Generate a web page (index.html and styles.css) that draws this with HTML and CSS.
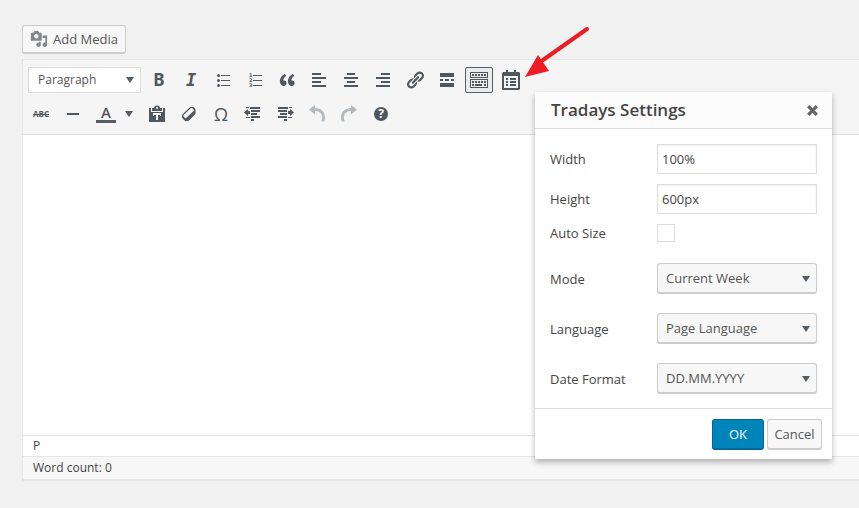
FILE: index.html
```html
<!DOCTYPE html>
<html lang="en">
<head>
<meta charset="utf-8">
<title>Tradays Settings</title>
<link rel="stylesheet" href="styles.css">
</head>
<body>
<main class="page">
  <button class="button add-media" type="button">
    <svg class="media-icon" viewBox="0 0 20 20" aria-hidden="true"><path d="M13 11V4c0-.55-.45-1-1-1h-1.67L9 1H5L3.67 3H2c-.55 0-1 .45-1 1v7c0 .55.45 1 1 1h10c.55 0 1-.45 1-1zM7 4.5c1.38 0 2.5 1.12 2.5 2.5S8.38 9.5 7 9.5 4.5 8.38 4.5 7 5.62 4.5 7 4.5zM14 6h5v10.5c0 1.38-1.12 2.5-2.5 2.5S14 17.88 14 16.5s1.12-2.5 2.5-2.5c.17 0 .34.02.5.05V9h-3V6zm-4 8.05V13h2v3.5c0 1.38-1.12 2.5-2.5 2.5S7 17.88 7 16.5 8.12 14 9.5 14c.17 0 .34.02.5.05z"/></svg>
    Add Media
  </button>

  <section class="editor">
    <div class="toolbar" role="toolbar" aria-label="Formatting">
      <div class="toolbar-row">
        <span class="select-wrap format">
          <select class="format-select" aria-label="Text format"><option>Paragraph</option></select>
        </span>
        <button class="tool tool-bold" type="button" aria-label="Bold">B</button>
        <button class="tool tool-italic" type="button" aria-label="Italic">I</button>
        <button class="tool" type="button" aria-label="Bulleted list"><svg viewBox="0 0 20 20"><circle cx="5.5" cy="5.5" r="1.5"/><circle cx="5.5" cy="10.5" r="1.5"/><circle cx="5.5" cy="15.5" r="1.5"/><path d="M8 5h9v1H8zM8 10h9v1H8zM8 15h9v1H8z"/></svg></button>
        <button class="tool" type="button" aria-label="Numbered list"><svg viewBox="0 0 20 20"><path d="M8 5h9v1H8zM8 10h9v1H8zM8 15h9v1H8z"/><text class="digit" x="4" y="7">1</text><text class="digit" x="4" y="12">2</text><text class="digit" x="4" y="17">3</text></svg></button>
        <button class="tool" type="button" aria-label="Blockquote"><svg viewBox="0 0 20 20"><path d="M9.49 13.22c0-.74-.2-1.38-.61-1.9-.62-.78-1.83-.88-2.53-.72-.29-1.65 1.11-3.75 2.92-4.65L7.88 4c-2.73 1.3-5.42 4.28-4.96 8.05C3.21 14.43 4.59 16 6.54 16c.85 0 1.56-.25 2.12-.75s.83-1.18.83-2.03zm8.05 0c0-.74-.2-1.38-.61-1.9-.63-.78-1.83-.88-2.53-.72-.29-1.65 1.11-3.75 2.92-4.65L15.93 4c-2.73 1.3-5.41 4.28-4.95 8.05.29 2.38 1.66 3.95 3.61 3.95.85 0 1.56-.25 2.12-.75s.83-1.18.83-2.03z"/></svg></button>
        <button class="tool" type="button" aria-label="Align left"><svg viewBox="0 0 20 20"><path d="M12 5V3H3v2h9zm5 4V7H3v2h14zm-5 4v-2H3v2h9zm5 4v-2H3v2h14z"/></svg></button>
        <button class="tool" type="button" aria-label="Align center"><svg viewBox="0 0 20 20"><path d="M14 5V3H6v2h8zm3 4V7H3v2h14zm-3 4v-2H6v2h8zm3 4v-2H3v2h14z"/></svg></button>
        <button class="tool" type="button" aria-label="Align right"><svg viewBox="0 0 20 20"><path d="M17 5V3H8v2h9zm0 4V7H3v2h14zm0 4v-2H8v2h9zm0 4v-2H3v2h14z"/></svg></button>
        <button class="tool" type="button" aria-label="Insert link"><svg viewBox="0 0 20 20"><path d="M17.74 2.76c1.68 1.69 1.68 4.41 0 6.1l-1.53 1.52c-1.12 1.12-2.7 1.47-4.14 1.09l2.62-2.61.76-.77.76-.76c.84-.84.84-2.2 0-3.04-.84-.85-2.2-.85-3.04 0l-.77.76-3.38 3.38c-.37-1.44-.02-3.02 1.1-4.14l1.52-1.53c1.69-1.68 4.42-1.68 6.1 0zM8.59 13.43l5.34-5.34c.42-.42.42-1.1 0-1.52-.44-.43-1.13-.39-1.53 0l-5.33 5.34c-.42.42-.42 1.1 0 1.52.44.43 1.13.39 1.52 0zm-.76 2.29l4.14-4.15c.38 1.44.03 3.02-1.09 4.14l-1.52 1.53c-1.69 1.68-4.41 1.68-6.1 0-1.68-1.68-1.68-4.42 0-6.1l1.53-1.52c1.12-1.12 2.7-1.47 4.14-1.1l-4.14 4.15c-.85.84-.85 2.2 0 3.05.84.84 2.2.84 3.04 0z"/></svg></button>
        <button class="tool" type="button" aria-label="Read more tag"><svg viewBox="0 0 20 20"><path d="M17 7V3H3v4h14zM6 11V9H3v2h3zm6 0V9H8v2h4zm5 0V9h-3v2h3zm0 6v-4H3v4h14z"/></svg></button>
        <button class="tool tool-active" type="button" aria-label="Toolbar toggle" aria-pressed="true"><svg viewBox="0 0 20 20"><path fill-rule="evenodd" d="M1 2h18v6H1zM2 3v4h16V3zM1 9h18v9H1zM2 10v7h16v-7z"/><path d="M3 4h2v2H3zM6 4h2v2H6zM9 4h2v2H9zM12 4h2v2h-2zM15 4h2v2h-2zM3 11h2v2H3zM6 11h2v2H6zM9 11h2v2H9zM12 11h2v2h-2zM15 11h2v2h-2zM3 14h2v2H3zM6 14h7v2H6zM15 14h2v2h-2z"/></svg></button>
        <button class="tool" type="button" aria-label="Tradays calendar"><svg viewBox="0 0 20 20"><path fill-rule="evenodd" d="M2 2h3V0h2v2h6V0h2v2h3l1 1v16l-1 1H2l-1-1V3zM3 6v12h14V6z"/><path d="M5 8h2v2H5zM9 8h6v2H9zM5 11h2v2H5zM9 11h6v2H9zM5 14h2v2H5zM9 14h6v2H9z"/></svg></button>
      </div>
      <div class="toolbar-row">
        <button class="tool tool-strike" type="button" aria-label="Strikethrough">ABC</button>
        <button class="tool" type="button" aria-label="Horizontal line"><svg viewBox="0 0 20 20"><path d="M4 9h12v2H4z"/></svg></button>
        <button class="tool tool-color" type="button" aria-label="Text color"><span class="color-letter">A</span><span class="caret"></span></button>
        <button class="tool" type="button" aria-label="Paste as text"><svg viewBox="0 0 20 20"><path fill-rule="evenodd" d="M5 7V4h2c0-1.500 1.200-2.500 3-2.500s3 1 3 2.500h2v3zM10 3a1 1 0 1 0 0 2 1 1 0 0 0 0-2z"/><path fill-rule="evenodd" d="M2 4h2v4h12V4h2v14H2zM6 9v3h1v-1h2v5h2v-5h2v1h1V9z"/></svg></button>
        <button class="tool" type="button" aria-label="Clear formatting"><svg viewBox="0 0 20 20"><path fill-rule="evenodd" d="M12 3h2c1 0 2.500 1.500 2.500 2.500V9c0 .6-.2 1-.6 1.400L10 16.400c-.5.500-.9.600-1.400.600H7c-.6 0-1-.2-1.400-.6l-2-2c-.4-.4-.6-.8-.6-1.400v-1.500c0-.5.2-.9.600-1.300l7-6.700c.4-.4.800-.5 1.400-.5zM11.700 4.300L4.400 11.300c-.3.300-.3.600 0 .9l1.800 1.800c.3.300.7.300 1 0l7.600-7.300c.3-.3.3-.7 0-1l-1.500-1.400c-.5-.4-1.100-.4-1.600 0z"/></svg></button>
        <button class="tool tool-omega" type="button" aria-label="Special character">Ω</button>
        <button class="tool" type="button" aria-label="Decrease indent"><svg viewBox="0 0 20 20"><path d="M3 3h3v1H3zM7 3h10v2H7zM8 6h9v2H8zM8 9h6v2H8zM8 12h9v2H8zM3 13h4v1H3zM8 15h3v2H8zM1 8.500L5 5v2h2v3H5v2z"/></svg></button>
        <button class="tool" type="button" aria-label="Increase indent"><svg viewBox="0 0 20 20"><path d="M3 3h10v2H3zM14 3h3v1h-3zM3 6h9v2H3zM5 9h7v2H5zM3 12h9v2H3zM13 13h4v1h-4zM9 15h3v2H9zM19 8.500L15 5v2h-2v3h2v2z"/></svg></button>
        <button class="tool tool-off" type="button" aria-label="Undo" disabled><svg viewBox="0 0 20 20"><path d="M2 5.500L8 1v3c6 0 10 4 10 9.500 0 1.500-.3 2.800-.8 4h-3c.6-1.200.9-2.400.9-3.700C15.100 9.600 12.500 7 8 7v3.500z"/></svg></button>
        <button class="tool tool-off" type="button" aria-label="Redo" disabled><svg viewBox="0 0 20 20"><path d="M18 5.500L12 1v3C6 4 2 8 2 13.500c0 1.500.3 2.800.8 4h3c-.6-1.200-.9-2.400-.9-3.700C4.900 9.600 7.500 7 12 7v3.500z"/></svg></button>
        <button class="tool" type="button" aria-label="Keyboard shortcuts"><span class="help">?</span></button>
      </div>
    </div>
    <textarea class="content" aria-label="Post content"></textarea>
    <div class="path">P</div>
    <div class="status">Word count: 0</div>
  </section>
</main>

<svg class="pointer" viewBox="0 0 66 54" aria-hidden="true"><path d="M62 4L18 35" stroke="#ed1c24" stroke-width="4" stroke-linecap="round"/><path d="M0 52l13-22 11 16z" fill="#ed1c24"/></svg>

<form class="dialog" role="dialog" aria-labelledby="dialog-title">
  <header class="dialog-head">
    <h1 class="dialog-title" id="dialog-title">Tradays Settings</h1>
    <button class="close" type="button" aria-label="Close"><svg viewBox="0 0 12 12"><path d="M2 2l8 8M10 2l-8 8" stroke="currentColor" stroke-width="3"/></svg></button>
  </header>
  <div class="dialog-body">
    <div class="field"><label for="width">Width</label><input class="text-input" id="width" type="text" value="100%"></div>
    <div class="field"><label for="height">Height</label><input class="text-input" id="height" type="text" value="600px"></div>
    <div class="field field-check"><label for="auto">Auto Size</label><input class="check" id="auto" type="checkbox"></div>
    <div class="field field-select"><label for="mode">Mode</label><span class="select-wrap"><select class="button" id="mode"><option>Current Week</option></select></span></div>
    <div class="field field-select"><label for="language">Language</label><span class="select-wrap"><select class="button" id="language"><option>Page Language</option></select></span></div>
    <div class="field field-select"><label for="date">Date Format</label><span class="select-wrap"><select class="button" id="date"><option>DD.MM.YYYY</option></select></span></div>
  </div>
  <footer class="dialog-foot">
    <button class="button primary" type="submit">OK</button>
    <button class="button cancel" type="button">Cancel</button>
  </footer>
</form>
</body>
</html>
```
FILE: styles.css
```css
* { box-sizing: border-box; }

body {
  margin: 0;
  background: #f1f1f1;
  color: #444;
  font: 13px/20px "Segoe UI", "Open Sans", "Noto Sans", sans-serif;
}

button, input, select, textarea { font: inherit; color: inherit; margin: 0; }

.page { padding: 25px 0 28px 22px; }

.button {
  height: 29px;
  padding: 0 8px;
  border: 1px solid #ccc;
  border-bottom-width: 2px;
  border-radius: 3px;
  background: #f7f7f7;
  color: #555;
}

.add-media {
  display: flex;
  align-items: center;
  gap: 5px;
  padding: 0 7px;
}
.media-icon { width: 18px; height: 18px; fill: #82878c; }

.editor {
  margin-top: 5px;
  border: 1px solid #e5e5e5;
  border-right: 0;
  box-shadow: 0 1px 1px rgba(0, 0, 0, .04);
}

.toolbar {
  padding: 3px 2px;
  border-bottom: 1px solid #ddd;
  background: #f5f5f5;
}
.toolbar-row { display: flex; align-items: center; height: 34px; }

.select-wrap { position: relative; display: block; }
.select-wrap select {
  display: block;
  width: 100%;
  appearance: none;
  outline: 0;
}
.select-wrap::after, .caret {
  border: 4px solid transparent;
  border-top: 6px solid #555d66;
  border-bottom: 0;
}
.select-wrap::after {
  content: "";
  position: absolute;
  top: 50%;
  right: 7px;
  margin-top: -3px;
  pointer-events: none;
}
.format { width: 113px; margin: 0 0 0 3px; }
.format + .tool { margin-left: 4px; }
.select-wrap .format-select {
  height: 26px;
  padding: 0 9px;
  border: 1px solid #ddd;
  border-radius: 0;
  background: #fff;
  color: #555;
  font-size: 12px;
}

.tool {
  display: flex;
  align-items: center;
  justify-content: center;
  flex: none;
  width: 28px;
  height: 26px;
  margin: 0 2px;
  padding: 0;
  border: 1px solid transparent;
  border-radius: 2px;
  background: none;
  color: #50575f;
}
.tool svg { flex: none; width: 20px; height: 20px; fill: currentColor; }
.digit { font: bold 5px/5px "DejaVu Sans", sans-serif; }
.tool-active { border-color: #555d66; background: #ebebeb; }
.tool-bold { font: bold 17px/20px "Noto Sans", sans-serif; }
.tool-italic { font: italic bold 17px/20px "DejaVu Sans Mono", monospace; }
.tool-strike { font: bold 8px/12px "Open Sans", sans-serif; text-decoration: line-through; }
.tool-omega { font: 18px/20px "Open Sans", sans-serif; }
.tool-color { justify-content: flex-start; width: 48px; padding-left: 4px; gap: 9px; }
.color-letter {
  width: 20px;
  height: 18px;
  border-bottom: 3px solid #555d66;
  font: 600 15px/15px "Open Sans", sans-serif;
}
.tool-off { color: #b4b9be; }
.help {
  width: 14px;
  height: 14px;
  border-radius: 50%;
  background: #50575f;
  color: #fff;
  font: bold 12px/14px "Open Sans", sans-serif;
}

.content {
  display: block;
  width: 100%;
  height: 300px;
  border: 0;
  outline: 0;
  resize: none;
  background: #fff;
}
.path, .status {
  padding: 0 10px;
  border-top: 1px solid #e5e5e5;
  font-size: 12px;
}
.path { background: #fff; }
.status { background: #f7f7f7; line-height: 22px; }

.pointer {
  position: absolute;
  left: 525px;
  top: 25px;
  width: 66px;
  height: 54px;
}

.dialog {
  position: absolute;
  top: 92px;
  left: 535px;
  width: 297px;
  background: #fff;
  box-shadow: 0 3px 6px rgba(0, 0, 0, .3);
}
.dialog-head {
  display: flex;
  align-items: center;
  justify-content: space-between;
  height: 37px;
  padding: 0 13px 0 16px;
  border-bottom: 1px solid #ddd;
  background: #fcfcfc;
}
.dialog-title { margin: 0; font-size: 17px; font-weight: 600; line-height: 36px; }
.close { display: flex; padding: 0; border: 0; background: none; color: #666; }
.close svg { width: 13px; height: 13px; }

.dialog-body {
  display: flex;
  flex-direction: column;
  gap: 10px;
  padding: 15px 15px 14px;
}
.field { display: flex; align-items: center; justify-content: space-between; }
.field > .text-input, .field > .select-wrap { width: 160px; }
.text-input {
  height: 30px;
  padding: 0 4px;
  border: 1px solid #ddd;
  background: #fff;
  box-shadow: inset 0 1px 2px rgba(0, 0, 0, .07);
  outline: 0;
}
.field-check { justify-content: flex-start; height: 18px; }
.field-check label { width: 107px; }
.check {
  appearance: none;
  width: 18px;
  height: 18px;
  border: 1px solid #ddd;
  background: #fff;
}
.field-select { height: 31px; margin-top: 9px; }
.field-check + .field-select { margin-top: 11px; }
.field-select .button { height: 31px; }

.dialog-foot {
  display: flex;
  justify-content: flex-end;
  gap: 3px;
  padding: 10px 10px 9px;
  border-top: 1px solid #ddd;
}
.dialog-foot .button { height: 31px; }
.primary { width: 52px; border-color: #006799; background: #0085ba; color: #fff; }
.cancel { width: 55px; padding: 0; }
```
